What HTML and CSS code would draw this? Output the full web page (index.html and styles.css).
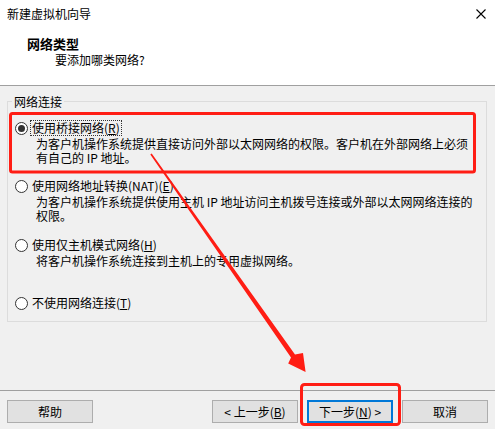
FILE: index.html
```html
<!DOCTYPE html>
<html lang="zh-CN">
<head>
<meta charset="utf-8">
<title>新建虚拟机向导</title>
<link rel="stylesheet" href="styles.css">
</head>
<body>
<div class="window">
  <div class="header">
    <div class="titlebar">
      <span class="title">新建虚拟机向导</span>
      <svg class="close" width="10" height="10" viewBox="0 0 10 10"><path d="M0.5 0.5 L9.5 9.5 M9.5 0.5 L0.5 9.5" stroke="#000" stroke-width="1.1" fill="none"/></svg>
    </div>
    <div class="heading">网络类型</div>
    <div class="subheading">要添加哪类网络?</div>
  </div>

  <fieldset class="group">
    <legend>网络连接</legend>
    <div class="option first">
      <span class="radio checked"></span>
      <span class="label focus">使用桥接网络(<u>R</u>)</span>
    </div>
    <div class="desc">为客户机操作系统提供直接访问外部以太网网络的权限。客户机在外部网络上必须<br>有自己的 IP 地址。</div>

    <div class="option second">
      <span class="radio"></span>
      <span class="label">使用网络地址转换(NAT)(<u>E</u>)</span>
    </div>
    <div class="desc">为客户机操作系统提供使用主机 IP 地址访问主机拨号连接或外部以太网网络连接的<br>权限。</div>

    <div class="option third">
      <span class="radio"></span>
      <span class="label">使用仅主机模式网络(<u>H</u>)</span>
    </div>
    <div class="desc">将客户机操作系统连接到主机上的专用虚拟网络。</div>

    <div class="option fourth">
      <span class="radio"></span>
      <span class="label">不使用网络连接(<u>T</u>)</span>
    </div>
  </fieldset>

  <div class="footer">
    <button class="btn">帮助</button>
    <div class="spacer"></div>
    <button class="btn">&lt; 上一步(<u>B</u>)</button>
    <button class="btn default">下一步(<u>N</u>) &gt;</button>
    <button class="btn">取消</button>
  </div>

  <svg class="annot" width="495" height="429" viewBox="0 0 495 429">
    <rect x="10.5" y="113.5" width="464" height="58.5" rx="2" fill="none" stroke="#ff1d14" stroke-width="3"/>
    <rect x="301.5" y="384.5" width="98" height="40" rx="3" fill="none" stroke="#ff1d14" stroke-width="3"/>
    <polygon points="151.7,153.5 295,354.6 303,353 305.6,372 288.2,363.5 291,357.4 150.3,154.5" fill="#ff1d14"/>
  </svg>
</div>
</body>
</html>
```

FILE: styles.css
```css
* { box-sizing: border-box; }
html, body { margin: 0; padding: 0; }
body {
  width: 495px;
  height: 429px;
  overflow: hidden;
  font-family: "Noto Sans CJK SC", "Noto Sans", sans-serif;
  font-size: 12px;
  color: #000;
  background: #f0f0f0;
}
.window {
  position: relative;
  width: 495px;
  height: 429px;
  display: flex;
  flex-direction: column;
}
.header {
  height: 86px;
  background: #fff;
  border-bottom: 1px solid #a0a0a0;
  flex: none;
}
.titlebar {
  display: flex;
  justify-content: space-between;
  align-items: center;
  height: 16px;
  margin-top: 6px;
  padding: 0 9px 0 7px;
  line-height: 16px;
}
.heading {
  margin-top: 14px;
  padding-left: 27px;
  font-weight: bold;
  font-size: 13px;
  line-height: 16px;
}
.subheading {
  padding-left: 55px;
  line-height: 16px;
}
.group {
  flex: none;
  margin: 9px 8px 0 7px;
  padding: 12px 7px 10px 7px;
  border: 1px solid #dcdcdc;
  min-width: 0;
}
.group legend {
  padding: 0 2px;
  margin-left: -3px;
  line-height: 13px;
}
.option {
  display: flex;
  align-items: center;
  height: 16px;
}
.option.second { margin-top: 13px; }
.option.third { margin-top: 14px; }
.option.fourth { margin-top: 27px; }
.radio {
  width: 13px;
  height: 13px;
  border: 1px solid #333;
  border-radius: 50%;
  background: #fff;
  flex: none;
  display: flex;
  align-items: center;
  justify-content: center;
}
.radio.checked::after {
  content: "";
  width: 7px;
  height: 7px;
  border-radius: 50%;
  background: #333;
}
.label {
  margin-left: 2px;
  padding: 0 1px;
  line-height: 14px;
  border: 1px solid transparent;
  white-space: nowrap;
}
.label.focus { border: 1px dotted #333; }
.desc {
  margin-top: 1px;
  margin-left: 21px;
  line-height: 14px;
  white-space: nowrap;
}
.footer {
  margin-top: auto;
  border-top: 1px solid #a0a0a0;
  padding: 9px 7px 6px 7px;
  display: flex;
  gap: 9px;
}
.spacer { flex: 1; }
.btn {
  width: 86px;
  height: 23px;
  border: 1px solid #adadad;
  background: #e1e1e1;
  font-family: inherit;
  font-size: 12px;
  color: #000;
  padding: 0;
  line-height: 20px;
}
.btn.default { border: 2px solid #0078d7; }
.annot {
  position: absolute;
  left: 0;
  top: 0;
  pointer-events: none;
}
```
